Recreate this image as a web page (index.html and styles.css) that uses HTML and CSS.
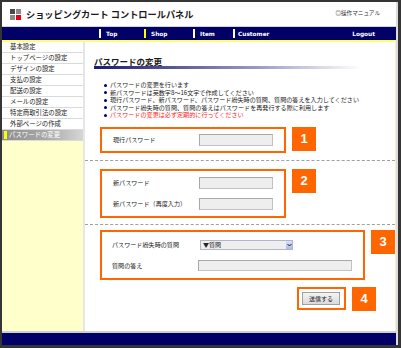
FILE: index.html
```html
<!DOCTYPE html>
<html lang="ja">
<head>
    <meta charset="UTF-8">
    <title>ショッピングカート コントロールパネル</title>
    <link rel="stylesheet" href="styles.css">
</head>
<body>
    <div class="frame">
        <div class="header">
            <div class="logo">
                <span class="sq dark"></span><span class="sq"></span>
                <span class="sq"></span><span class="sq red"></span>
            </div>
            <h1 class="site-title">ショッピングカート コントロールパネル</h1>
            <a class="manual" href="#">◎操作マニュアル</a>
        </div>

        <div class="nav">
            <a class="nav-item nav-top" href="#">Top</a>
            <a class="nav-item nav-shop current" href="#">Shop</a>
            <a class="nav-item nav-goods" href="#">Item</a>
            <a class="nav-item nav-customer" href="#">Customer</a>
            <a class="nav-logout" href="#">Logout</a>
        </div>

        <div class="main">
            <div class="sidebar">
                <ul class="side-menu">
                    <li>基本設定</li>
                    <li>トップページの設定</li>
                    <li>デザインの設定</li>
                    <li>支払の設定</li>
                    <li>配送の設定</li>
                    <li>メールの設定</li>
                    <li>特定商取引法の設定</li>
                    <li>外部ページの作成</li>
                    <li class="active">パスワードの変更</li>
                </ul>
            </div>

            <div class="content">
                <h2 class="page-title">パスワードの変更</h2>

                <ul class="notes">
                    <li>パスワードの変更を行います</li>
                    <li>新パスワードは英数字8～16文字で作成してください</li>
                    <li>現行パスワード、新パスワード、パスワード紛失時の質問、質問の答えを入力してください</li>
                    <li>パスワード紛失時の質問、質問の答えはパスワードを再発行する際に利用します</li>
                    <li class="warn">パスワードの変更は必ず定期的に行ってください</li>
                </ul>

                <div class="step step-1">
                    <div class="box">
                        <div class="field">
                            <span class="label">現行パスワード</span>
                            <span class="text-input"></span>
                        </div>
                    </div>
                    <span class="badge">1</span>
                </div>

                <div class="divider"></div>

                <div class="step step-2">
                    <div class="box">
                        <div class="field">
                            <span class="label">新パスワード</span>
                            <span class="text-input"></span>
                        </div>
                        <div class="field">
                            <span class="label">新パスワード（再度入力）</span>
                            <span class="text-input"></span>
                        </div>
                    </div>
                    <span class="badge">2</span>
                </div>

                <div class="divider divider-2"></div>

                <div class="step step-3">
                    <div class="box wide">
                        <div class="field">
                            <span class="label">パスワード紛失時の質問</span>
                            <span class="select">
                                <span class="select-text">▼質問</span>
                                <span class="select-arrow">
                                    <svg width="5" height="4" viewBox="0 0 5 4"><path d="M0.5 1 L2.5 3 L4.5 1" fill="none" stroke="#223" stroke-width="1"/></svg>
                                </span>
                            </span>
                        </div>
                        <div class="field">
                            <span class="label">質問の答え</span>
                            <span class="text-input long"></span>
                        </div>
                    </div>
                    <span class="badge">3</span>
                </div>

                <div class="step step-4">
                    <div class="box small">
                        <button class="send-btn">送信する</button>
                    </div>
                    <span class="badge">4</span>
                </div>
            </div>
        </div>

        <div class="footer"></div>
    </div>
</body>
</html>
```

FILE: styles.css
```css
body {
    margin: 0;
    background-color: #353535;
    font-family: "Noto Sans CJK JP", "DejaVu Sans", sans-serif;
    color: #222;
}

.frame {
    margin: 2px 3px 3px 2px;
    height: 343px;
    display: flex;
    flex-direction: column;
    background-color: #fff;
    border-right: 2px solid #dcdcdc;
    overflow: hidden;
}

/* header */
.header {
    height: 24px;
    border-bottom: 1px solid #d4d4d4;
    display: flex;
    align-items: center;
    padding: 0 16px 0 8px;
}

.logo {
    display: grid;
    grid-template-columns: 5px 5px;
    grid-template-rows: 5px 5px;
    gap: 1px;
    margin-right: 5px;
    margin-top: 1px;
}

.logo .sq {
    background-color: #8a8a8a;
}

.logo .dark {
    background-color: #4a4a4a;
}

.logo .red {
    background-color: #e60012;
}

.site-title {
    margin: 0;
    font-size: 9.2px;
    font-weight: bold;
    color: #1a1a1a;
    flex: 1;
    white-space: nowrap;
}

.manual {
    font-size: 5.6px;
    color: #333;
    text-decoration: none;
    margin-top: -2px;
}

/* navigation */
.nav {
    height: 13px;
    background-color: #000066;
    border-bottom: 2px solid #ffff66;
    display: flex;
    align-items: center;
    padding-left: 97px;
    padding-right: 21px;
    font-family: "DejaVu Sans", sans-serif;
    font-weight: bold;
    font-size: 5.8px;
}

.nav a {
    color: #fff;
    text-decoration: none;
}

.nav-item {
    display: flex;
    align-items: center;
    gap: 5px;
}

.nav-item::before {
    content: "";
    width: 2px;
    height: 9px;
    background-color: #fff;
}

.nav-item.current::before {
    background-color: #ffff00;
}

.nav-top { width: 45px; }
.nav-shop { width: 49px; }
.nav-goods { width: 40px; }
.nav-customer { flex: 1; gap: 3px; }

/* main area */
.main {
    flex: 1;
    display: flex;
}

.sidebar {
    width: 81px;
    background-color: #ffffcc;
    border-right: 2px solid #e6e6e6;
}

.side-menu {
    list-style: none;
    margin: 0;
    padding: 0;
}

.side-menu li {
    height: 10px;
    line-height: 10px;
    padding-left: 8px;
    font-size: 6.4px;
    color: #222;
    background-color: #fff;
    border-bottom: 1px solid #dadada;
    white-space: nowrap;
}

.side-menu li.active {
    position: relative;
    padding-left: 7px;
    color: #fff;
    background: linear-gradient(to right, #8c8c8c, #a9a9a9 55%, #d6d6d6);
}

.side-menu li.active::before {
    content: "";
    position: absolute;
    left: 2px;
    top: 1px;
    width: 3px;
    height: 8px;
    background-color: #ffff00;
}

.content {
    flex: 1;
    border-right: 1px solid #f3efcf;
}

.page-title {
    margin: 14px 0 0 9px;
    width: 267px;
    font-size: 8.5px;
    line-height: 10px;
    font-weight: bold;
    color: #1a1a1a;
    padding-bottom: 3px;
    background: linear-gradient(to right, #1a1a70, #9898c0 60%, #fff) bottom / 100% 3px no-repeat;
}

.notes {
    list-style: none;
    margin: 12px 0 0;
    padding-left: 25px;
}

.notes li {
    position: relative;
    font-size: 6.1px;
    line-height: 7.6px;
    white-space: nowrap;
    color: #222;
}

.notes li::before {
    content: "";
    position: absolute;
    left: -6px;
    top: 2.5px;
    width: 3px;
    height: 3px;
    border-radius: 50%;
    background-color: #000066;
}

.notes li.warn {
    color: #ff2222;
}

/* steps */
.step {
    display: flex;
    align-items: flex-start;
    gap: 6px;
    padding-left: 15px;
}

.step-1 { margin-top: 8px; }
.step-2 { margin-top: 8px; }
.step-3 { margin-top: 5px; }
.step-4 { margin-top: 7px; padding-left: 212px; }

.box {
    box-sizing: border-box;
    width: 186px;
    border: 2px solid #ff6600;
    padding: 5px 11px;
    display: flex;
    flex-direction: column;
    gap: 9px;
}

.step-2 .box {
    padding: 6px 11px;
}

.box.wide {
    width: 265px;
    padding: 7px 11px 6px 10px;
}

.box.small {
    width: 49px;
    padding: 3px 4px 3px 3px;
}

.field {
    display: flex;
    align-items: center;
    height: 12px;
}

.label {
    width: 87px;
    font-size: 6.1px;
    white-space: nowrap;
    color: #222;
}

.wide .label {
    width: 88px;
}

.text-input {
    box-sizing: border-box;
    width: 74px;
    height: 12px;
    background-color: #eeeeee;
    border: 1px solid #c2c2c2;
    border-top-color: #a8a8a8;
    border-left-color: #a8a8a8;
}

.text-input.long {
    width: 157px;
    height: 11px;
}

.select {
    box-sizing: border-box;
    width: 93px;
    height: 10px;
    display: flex;
    align-items: center;
    background-color: #eeeeee;
    border: 1px solid #b4b4c4;
}

.select-text {
    flex: 1;
    font-size: 6px;
    padding-left: 2px;
    color: #222;
}

.select-arrow {
    width: 6px;
    height: 8px;
    display: flex;
    align-items: center;
    justify-content: center;
    background: linear-gradient(#d6e0f8, #a8bce8);
}

.send-btn {
    box-sizing: border-box;
    width: 38px;
    height: 13px;
    padding: 0;
    font-family: "Noto Sans CJK JP", sans-serif;
    font-size: 6px;
    color: #222;
    background: linear-gradient(#f4f4f4, #dadada);
    border: 1px solid #a0a0a0;
}

.badge {
    width: 24px;
    height: 24px;
    background-color: #ff6600;
    color: #fff;
    font-family: "Liberation Sans", Arial, sans-serif;
    font-weight: bold;
    font-size: 13px;
    display: flex;
    align-items: center;
    justify-content: center;
}

.divider {
    border-top: 1px dashed #a0a0a0;
    margin-top: 7px;
}

.divider-2 {
    margin-top: 6px;
}

/* footer */
.footer {
    height: 12px;
    border-top: 2px solid #d0d0d0;
    background-color: #000066;
}
```
